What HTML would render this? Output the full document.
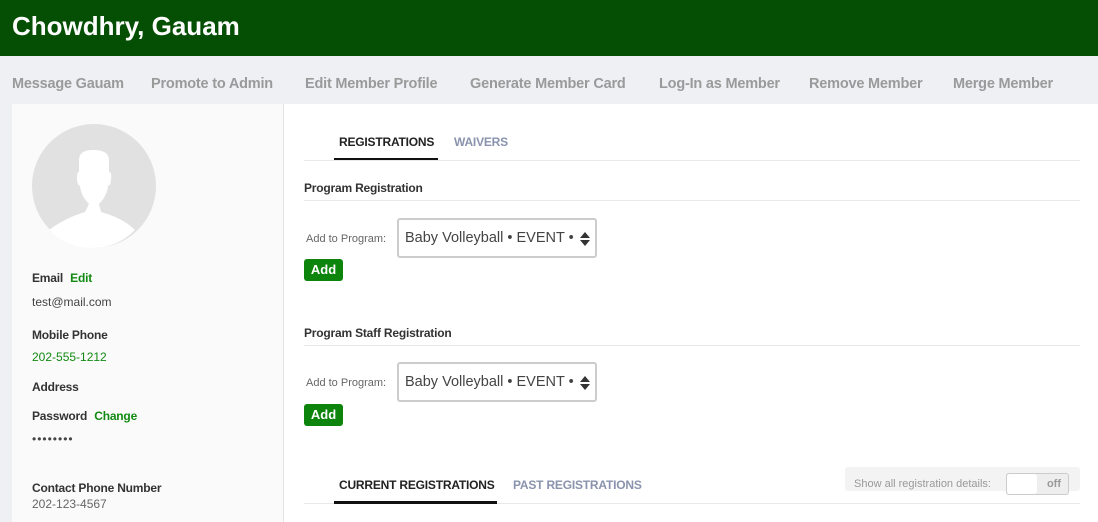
<!DOCTYPE html><html><head><style>
body{margin:0;width:1098px;height:522px;overflow:hidden;font-family:"Liberation Sans",sans-serif;background:#eef0f4;position:relative}
.a{position:absolute;white-space:nowrap}
.hd{left:0;top:0;width:1098px;height:56px;background:#044f04}
.nav{font-size:14.5px;font-weight:bold;color:#9a9a9a;top:76px;letter-spacing:-0.2px}
.lp{left:12px;top:104px;width:271px;height:418px;background:#fafafa;border-right:1px solid #e4e4e4}
.rp{left:284px;top:104px;width:814px;height:418px;background:#fff}
.lb{font-size:12px;font-weight:bold;color:#333;letter-spacing:-0.2px}
.v{font-size:12px;color:#444}
.g{color:#118a11}
.sel{width:200px;height:40px;border:2px solid #ccc;border-radius:3px;box-sizing:border-box;background:#fff;font-size:14.5px;color:#444;line-height:36px;padding-left:6px}
.btn{background:#0d850d;color:#fff;font-size:13px;font-weight:bold;border-radius:3px;width:39px;height:22px;line-height:22px;text-align:center}
.hr{height:1px;background:#e8e8e8}
</style></head><body>
<div class="a hd"></div>
<div class="a" style="left:12px;top:11px;font-size:26px;font-weight:bold;color:#fff">Chowdhry, Gauam</div>
<div class="a nav" style="left:12px">Message Gauam</div>
<div class="a nav" style="left:151px">Promote to Admin</div>
<div class="a nav" style="left:305px">Edit Member Profile</div>
<div class="a nav" style="left:470px">Generate Member Card</div>
<div class="a nav" style="left:659px">Log-In as Member</div>
<div class="a nav" style="left:809px">Remove Member</div>
<div class="a nav" style="left:953px">Merge Member</div>
<div class="a lp"></div>
<div class="a rp"></div>
<svg class="a" style="left:31px;top:124px" width="126" height="126"><circle cx="63" cy="62" r="62" fill="#e1e1e1"/><path d="M18 106 Q34 94 54 88 L58 80 Q50 72 49 62 Q46 61 46 54 Q46 48 48 48 L48 36 Q48 26 62 26 Q78 26 78 36 L78 48 Q81 48 80 55 Q80 61 77 62 Q76 72 68 80 L70 88 Q92 94 104 106 Q86 124 62 124 Q36 124 18 106Z" fill="#fff"/></svg>
<div class="a lb" style="left:32px;top:271px">Email <span class="g" style="margin-left:4px">Edit</span></div>
<div class="a v" style="left:32px;top:295px">test@mail.com</div>
<div class="a lb" style="left:32px;top:328px">Mobile Phone</div>
<div class="a v" style="left:32px;top:350px;color:#118a11">202-555-1212</div>
<div class="a lb" style="left:32px;top:380px">Address</div>
<div class="a lb" style="left:32px;top:409px">Password <span class="g" style="margin-left:4px">Change</span></div>
<div class="a v" style="left:32px;top:432px;letter-spacing:1px">••••••••</div>
<div class="a lb" style="left:32px;top:481px">Contact Phone Number</div>
<div class="a v" style="left:32px;top:497px;color:#666">202-123-4567</div>
<div class="a hr" style="left:304px;top:160px;width:776px"></div>
<div class="a" style="left:334px;top:158px;width:104px;height:2px;background:#111"></div>
<div class="a lb" style="left:339px;top:135px;color:#222">REGISTRATIONS</div>
<div class="a lb" style="left:454px;top:135px;color:#8a93ad">WAIVERS</div>
<div class="a lb" style="left:304px;top:181px">Program Registration</div>
<div class="a hr" style="left:304px;top:200px;width:776px"></div>
<div class="a" style="left:306px;top:233px;font-size:11px;color:#666">Add to Program:</div>
<div class="a sel" style="left:397px;top:218px">Baby Volleyball • EVENT •<svg style="position:absolute;right:5px;top:11px" width="10" height="16"><path d="M0 7 L5 1 L10 7Z M0 9 L5 15 L10 9Z" fill="#333"/></svg></div>
<div class="a btn" style="left:304px;top:259px">Add</div>
<div class="a lb" style="left:304px;top:326px">Program Staff Registration</div>
<div class="a hr" style="left:304px;top:345px;width:776px"></div>
<div class="a" style="left:306px;top:377px;font-size:11px;color:#666">Add to Program:</div>
<div class="a sel" style="left:397px;top:362px">Baby Volleyball • EVENT •<svg style="position:absolute;right:5px;top:11px" width="10" height="16"><path d="M0 7 L5 1 L10 7Z M0 9 L5 15 L10 9Z" fill="#333"/></svg></div>
<div class="a btn" style="left:304px;top:404px">Add</div>
<div class="a" style="left:845px;top:467px;width:235px;height:24px;background:#f3f3f3;border-radius:3px"></div>
<div class="a" style="left:854px;top:478px;font-size:11px;color:#999">Show all registration details:</div>
<div class="a" style="left:1006px;top:473px;width:61px;height:20px;border:1px solid #ccc;border-radius:3px;background:#eee"><div style="width:30px;height:20px;background:#fff;border-radius:3px"></div><span style="position:absolute;right:7px;top:4px;font-size:11px;font-weight:bold;color:#999">off</span></div>
<div class="a hr" style="left:304px;top:503px;width:776px"></div>
<div class="a" style="left:334px;top:501px;width:163px;height:3px;background:#111"></div>
<div class="a lb" style="left:339px;top:478px;color:#222">CURRENT REGISTRATIONS</div>
<div class="a lb" style="left:513px;top:478px;color:#8a93ad">PAST REGISTRATIONS</div>
</body></html>
